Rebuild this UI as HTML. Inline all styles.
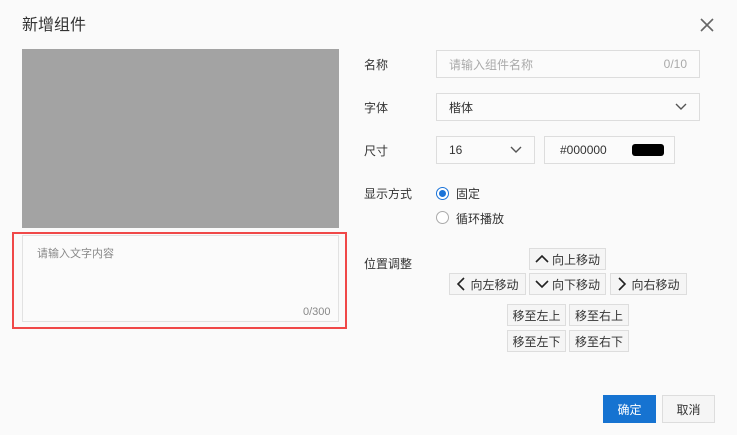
<!DOCTYPE html>
<html><head><meta charset="utf-8"><style>
*{box-sizing:border-box;margin:0;padding:0}
body{width:737px;height:435px;background:#fafafa;font-family:"Liberation Sans","Noto Sans CJK SC",sans-serif;position:relative;overflow:hidden;color:#333}
.a{position:absolute}
.t{font-size:16px;color:#333;left:22px;top:11px}
.lab{font-size:12px;color:#333;left:364px}
.in{border:1px solid #ddd;background:#fbfbfb;font-size:12px;display:flex;align-items:center;padding:0 12px}
.btn{position:absolute;border:1px solid #ddd;background:#f5f5f5;font-size:12px;color:#333;display:flex;align-items:center;justify-content:center;height:22px}
</style></head><body>
<div class="a t">新增组件</div>
<svg class="a" style="left:699px;top:17px" width="16" height="16"><path d="M2 2L14 14M14 2L2 14" stroke="#666" stroke-width="1.6"/></svg>
<div class="a" style="left:22px;top:49px;width:317px;height:179px;background:#a3a3a3"></div>
<div class="a" style="left:12px;top:232px;width:335px;height:97px;border:2px solid #f04848"></div>
<div class="a" style="left:22px;top:235px;width:317px;height:87px;border:1px solid #e2e2e2;background:#fbfbfb"></div>
<div class="a" style="left:37px;top:245px;font-size:11px;color:#888">请输入文字内容</div>
<div class="a" style="left:303px;top:306px;font-size:11px;color:#888">0/300</div>

<div class="a lab" style="top:56px">名称</div>
<div class="a in" style="left:436px;top:50px;width:264px;height:28px;color:#aaa;justify-content:space-between"><span>请输入组件名称</span><span>0/10</span></div>
<div class="a lab" style="top:99px">字体</div>
<div class="a in" style="left:436px;top:93px;width:264px;height:28px;justify-content:space-between"><span>楷体</span><svg width="12" height="8"><path d="M1 1L6 6L11 1" fill="none" stroke="#555" stroke-width="1.4"/></svg></div>
<div class="a lab" style="top:142px">尺寸</div>
<div class="a in" style="left:436px;top:136px;width:99px;height:28px;justify-content:space-between"><span>16</span><svg width="12" height="8"><path d="M1 1L6 6L11 1" fill="none" stroke="#555" stroke-width="1.4"/></svg></div>
<div class="a in" style="left:544px;top:136px;width:131px;height:28px;justify-content:space-between;padding:0 10px 0 15px"><span>#000000</span><span style="width:32px;height:12px;background:#000;border-radius:3px"></span></div>
<div class="a lab" style="top:185px">显示方式</div>
<div class="a" style="left:436px;top:187px;width:13px;height:13px;border:1px solid #1a73d8;border-radius:50%;background:#fff"><div style="margin:2px;width:7px;height:7px;border-radius:50%;background:#1a73d8"></div></div>
<div class="a" style="left:456px;top:185px;font-size:12px">固定</div>
<div class="a" style="left:436px;top:211px;width:13px;height:13px;border:1px solid #aaa;border-radius:50%;background:#fff"></div>
<div class="a" style="left:456px;top:210px;font-size:12px">循环播放</div>
<div class="a lab" style="top:255px">位置调整</div>

<div class="btn" style="left:529px;top:248px;width:77px"><svg width="14" height="10" style="margin-right:3px"><path d="M1 8L7 2L13 8" fill="none" stroke="#222" stroke-width="1.6"/></svg>向上移动</div>
<div class="btn" style="left:449px;top:273px;width:77px"><svg width="10" height="14" style="margin-right:4px"><path d="M8 1L2 7L8 13" fill="none" stroke="#222" stroke-width="1.6"/></svg>向左移动</div>
<div class="btn" style="left:529px;top:273px;width:77px"><svg width="14" height="10" style="margin-right:3px"><path d="M1 2L7 8L13 2" fill="none" stroke="#222" stroke-width="1.6"/></svg>向下移动</div>
<div class="btn" style="left:610px;top:273px;width:77px"><svg width="10" height="14" style="margin-right:4px"><path d="M2 1L8 7L2 13" fill="none" stroke="#222" stroke-width="1.6"/></svg>向右移动</div>
<div class="btn" style="left:507px;top:304px;width:59px">移至左上</div>
<div class="btn" style="left:569px;top:304px;width:60px">移至右上</div>
<div class="btn" style="left:507px;top:330px;width:59px">移至左下</div>
<div class="btn" style="left:569px;top:330px;width:60px">移至右下</div>

<div class="btn" style="left:603px;top:395px;width:53px;height:28px;background:#1673d1;border-color:#1673d1;color:#fff">确定</div>
<div class="btn" style="left:662px;top:395px;width:53px;height:28px">取消</div>
</body></html>
